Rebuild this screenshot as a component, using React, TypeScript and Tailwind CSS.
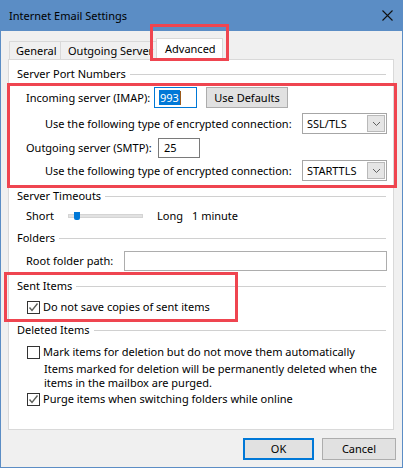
import React from "react";

function GroupHeader({ title }: { title: string }) {
  return (
    <div className="flex items-center h-[14px] pl-[8px] pr-[7px]">
      <span className="whitespace-nowrap leading-[14px]">{title}</span>
      <div className="flex-1 h-px bg-[#d0d0d0] ml-[4px] mt-[1px]" />
    </div>
  );
}

function CheckBox({ checked }: { checked: boolean }) {
  return (
    <div className="w-[13px] h-[13px] border border-[#333333] bg-white flex items-center justify-center shrink-0">
      {checked && (
        <svg width="11" height="11" viewBox="0 0 11 11">
          <path d="M1.5 5.5 L4 8.5 L9.5 1.5" fill="none" stroke="#5c5f5a" strokeWidth="1.4" />
        </svg>
      )}
    </div>
  );
}

function Select({ value }: { value: string }) {
  return (
    <div className="ml-auto w-[85px] h-[21px] border border-[#a6a6a6] bg-white flex items-center pl-[4px] pr-[1px]">
      <span className="flex-1 leading-[14px]">{value}</span>
      <div className="w-[18px] h-[17px] bg-[#e5e5e5] border border-[#b9b9b9] flex items-center justify-center">
        <svg width="9" height="6" viewBox="0 0 9 6">
          <path d="M1 1 L4.5 4.5 L8 1" fill="none" stroke="#606060" strokeWidth="1" />
        </svg>
      </div>
    </div>
  );
}

export default function App() {
  return (
    <div className="relative w-[403px] h-[468px] bg-[#f0f0f0] border border-t-0 border-[#5b8dc5] flex flex-col font-['Noto_Sans',sans-serif] text-[11px] text-black overflow-hidden">
      {/* title bar */}
      <div className="h-[31px] bg-[#5b8dc5] flex items-center pl-[8px] pr-[9px] -mx-px">
        <span className="flex-1 pl-px leading-[14px]">Internet Email Settings</span>
        <svg width="11" height="11" viewBox="0 0 11 11" className="mr-px">
          <path d="M0.5 0.5 L10.5 10.5 M10.5 0.5 L0.5 10.5" stroke="#111" strokeWidth="1.1" />
        </svg>
      </div>

      {/* tabs */}
      <div className="h-[29px] flex items-end pl-[8px]">
        <div className="w-[52px] h-[18px] mb-px border-l border-t border-r border-[#d9d9d9] bg-[#f0f0f0] flex items-center pl-[6px] leading-[14px]">
          General
        </div>
        <div className="w-[98px] h-[18px] mb-px border-t border-r border-[#d9d9d9] bg-[#f0f0f0] flex items-center pl-[7px] whitespace-nowrap overflow-hidden leading-[14px]">
          Outgoing Server
        </div>
        <div className="relative z-10 -ml-[3px] w-[67px] h-[22px] border-l border-t border-r border-[#d9d9d9] bg-white flex items-start pt-[3px] pl-[8px] leading-[14px]">
          Advanced
        </div>
      </div>

      {/* panel */}
      <div className="-mt-px ml-[7px] w-[386px] h-[371px] bg-white border border-[#d9d9d9] pt-[7px]">
        <GroupHeader title="Server Port Numbers" />

        <div className="mt-[6px] h-[21px] flex items-center pl-[17px] pr-[6px]">
          <span className="w-[128px] leading-[14px]">Incoming server (IMAP):</span>
          <div className="w-[43px] h-[21px] border border-[#0078d7] bg-white flex items-center pl-[4px]">
            <span className="bg-[#0078d7] text-white leading-[15px] px-px">993</span>
            <span className="w-px h-[14px] bg-[#9b5a1a]" />
          </div>
          <div className="ml-[9px] w-[82px] h-[21px] bg-[#e1e1e1] border border-[#adadad] flex items-center justify-center leading-[14px]">
            Use Defaults
          </div>
        </div>

        <div className="mt-[5px] h-[21px] flex items-center pl-[36px] pr-[6px]">
          <span className="leading-[14px]">Use the following type of encrypted connection:</span>
          <Select value="SSL/TLS" />
        </div>

        <div className="mt-[4px] h-[20px] flex items-center pl-[17px] pr-[6px]">
          <span className="w-[132px] leading-[14px]">Outgoing server (SMTP):</span>
          <div className="w-[42px] h-[20px] border border-[#7a7a7a] bg-white flex items-center pl-[5px] leading-[14px]">
            25
          </div>
        </div>

        <div className="mt-[2px] h-[21px] flex items-center pl-[36px] pr-[6px]">
          <span className="leading-[14px]">Use the following type of encrypted connection:</span>
          <Select value="STARTTLS" />
        </div>

        <div className="mt-[8px]">
          <GroupHeader title="Server Timeouts" />
        </div>

        <div className="mt-[6px] h-[14px] flex items-center pl-[17px]">
          <span className="w-[42px] leading-[14px]">Short</span>
          <div className="relative w-[75px] h-[4px] bg-[#e2e2e2] border border-[#d4d4d4]">
            <div className="absolute left-[5px] -top-[3px] w-[6px] h-[8px] bg-[#0078d7] rounded-b-[2px]" />
          </div>
          <span className="ml-[14px] w-[35px] leading-[14px]">Long</span>
          <span className="leading-[14px]">1 minute</span>
        </div>

        <div className="mt-[8px]">
          <GroupHeader title="Folders" />
        </div>

        <div className="mt-[6px] h-[20px] flex items-center pl-[17px] pr-[6px]">
          <span className="w-[98px] leading-[14px]">Root folder path:</span>
          <div className="w-[263px] h-[20px] border border-[#adadad] bg-white" />
        </div>

        <div className="mt-[8px]">
          <GroupHeader title="Sent Items" />
        </div>

        <div className="mt-[7px] h-[14px] flex items-center pl-[18px]">
          <CheckBox checked />
          <span className="ml-[3px] leading-[14px]">Do not save copies of sent items</span>
        </div>

        <div className="mt-[9px]">
          <GroupHeader title="Deleted Items" />
        </div>

        <div className="mt-[8px] h-[14px] flex items-center pl-[18px]">
          <CheckBox checked={false} />
          <span className="ml-[3px] leading-[14px]">Mark items for deletion but do not move them automatically</span>
        </div>

        <div className="mt-[3px] pl-[35px] leading-[14px] whitespace-nowrap">
          <div>Items marked for deletion will be permanently deleted when the</div>
          <div>items in the mailbox are purged.</div>
        </div>

        <div className="mt-[2px] h-[14px] flex items-center pl-[18px]">
          <CheckBox checked />
          <span className="ml-[3px] leading-[14px]">Purge items when switching folders while online</span>
        </div>
      </div>

      {/* buttons */}
      <div className="mt-[8px] flex justify-end gap-[8px] pr-[6px]">
        <div className="w-[71px] h-[22px] bg-[#e1e1e1] border-2 border-[#0078d7] flex items-center justify-center leading-[14px]">
          OK
        </div>
        <div className="w-[74px] h-[22px] bg-[#e1e1e1] border border-[#adadad] flex items-center justify-center leading-[14px]">
          Cancel
        </div>
      </div>

      {/* annotation highlights */}
      <div className="absolute left-[149px] top-[24px] w-[79px] h-[37px] border-[3px] border-[#ef4550] z-20 pointer-events-none" />
      <div className="absolute left-[6px] top-[83px] w-[390px] h-[105px] border-[3px] border-[#ef4550] z-20 pointer-events-none" />
      <div className="absolute left-[3px] top-[272px] w-[234px] h-[50px] border-[3px] border-[#ef4550] z-20 pointer-events-none" />
    </div>
  );
}
